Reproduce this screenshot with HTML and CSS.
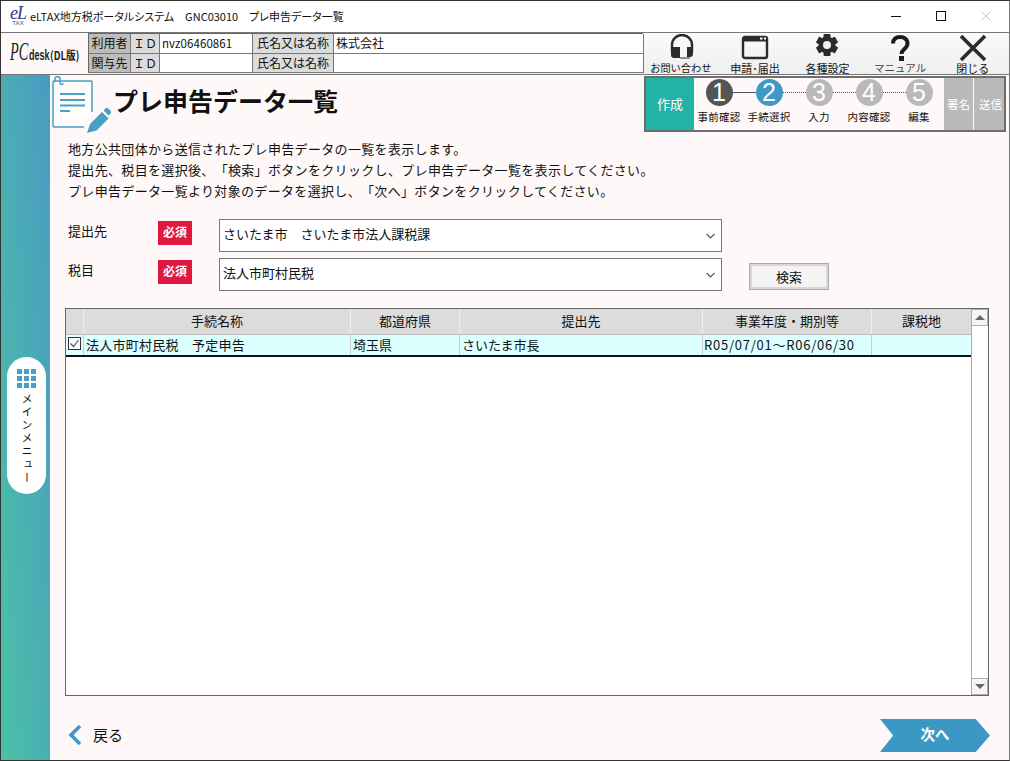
FILE: index.html
```html
<!DOCTYPE html>
<html lang="ja">
<head>
    <meta charset="UTF-8">
    <title>プレ申告データ一覧</title>
    <link rel="stylesheet" href="styles.css">
</head>
<body>
<div class="window">

    <!-- title bar -->
    <div class="titlebar">
        <div class="app-logo"><span class="app-logo-el">eL</span><span class="app-logo-tax">TAX</span></div>
        <div class="titlebar-text">eLTAX地方税ポータルシステム　GNC03010　プレ申告データ一覧</div>
        <div class="win-buttons">
            <svg width="12" height="12" viewBox="0 0 12 12"><path d="M1 6.500h10" stroke="#111" fill="none"/></svg>
            <svg width="12" height="12" viewBox="0 0 12 12"><rect x="1.500" y="1.500" width="9" height="9" stroke="#111" fill="none"/></svg>
            <svg width="12" height="12" viewBox="0 0 12 12"><path d="M1 1l10 10M11 1L1 11" stroke="#ccc" fill="none"/></svg>
        </div>
    </div>

    <!-- user info + tool buttons -->
    <div class="toolbar">
        <div class="pcdesk"><span class="pc">PC</span><span class="desk">desk</span><span class="dl">(DL版)</span></div>
        <div class="userinfo">
            <div class="ui-head ui-w1">利用者</div>
            <div class="ui-label ui-w2">ＩＤ</div>
            <div class="ui-value ui-w3 ui-id">nvz06460861</div>
            <div class="ui-label ui-w4">氏名又は名称</div>
            <div class="ui-value ui-w5">株式会社</div>
            <div class="ui-head">関与先</div>
            <div class="ui-label">ＩＤ</div>
            <div class="ui-value"></div>
            <div class="ui-label">氏名又は名称</div>
            <div class="ui-value"></div>
        </div>
        <div class="tools">
            <div class="tool">
                <svg width="32" height="28" viewBox="0 0 32 28"><path d="M6 18V11a10 10 0 0 1 20 0v7" fill="none" stroke="#2b2b2b" stroke-width="2.400"/><path d="M5 13h9v11H8a3 3 0 0 1-3-3zM27 13h-6v10h3a3 3 0 0 0 3-3z" fill="#2b2b2b"/><path d="M14 24h10" stroke="#2b2b2b" stroke-width="1"/></svg>
                <span class="tool-label tool-label-small">お問い合わせ</span>
            </div>
            <div class="tool">
                <svg width="32" height="28" viewBox="0 0 32 28"><rect x="4" y="3" width="24" height="21" rx="2" fill="none" stroke="#2b2b2b" stroke-width="2.400"/><path d="M4 3h24v4.500H4z" fill="#2b2b2b"/><path d="M21 4.500h2.500M25 4.500h2" stroke="#fff" stroke-width="2"/></svg>
                <span class="tool-label">申請･届出</span>
            </div>
            <div class="tool">
                <svg width="32" height="28" viewBox="0 0 32 28">
                    <g fill="#2b2b2b">
                        <rect x="12.500" y="0" width="7" height="22" rx="1"/>
                        <rect x="12.500" y="0" width="7" height="22" rx="1" transform="rotate(60 16 11)"/>
                        <rect x="12.500" y="0" width="7" height="22" rx="1" transform="rotate(120 16 11)"/>
                        <circle cx="16" cy="11" r="8.500"/>
                    </g>
                    <circle cx="16" cy="11" r="4" fill="#f3f3f3"/>
                </svg>
                <span class="tool-label">各種設定</span>
            </div>
            <div class="tool">
                <svg width="32" height="28" viewBox="0 0 32 28"><path d="M9 9.500C9 5 12 3 16 3s7.500 2 7.500 6.500c0 5.500-6 5.500-6 10.500" fill="none" stroke="#1c1c1c" stroke-width="4"/><rect x="15" y="22" width="5" height="5" fill="#1c1c1c"/></svg>
                <span class="tool-label tool-label-thin">マニュアル</span>
            </div>
            <div class="tool">
                <svg width="32" height="28" viewBox="0 0 32 28"><path d="M4 2l24 24M28 2L4 26" fill="none" stroke="#2b2b2b" stroke-width="3.600"/></svg>
                <span class="tool-label">閉じる</span>
            </div>
        </div>
    </div>

    <div class="main">
        <!-- left side menu -->
        <div class="sidebar">
            <div class="menu-pill">
                <div class="menu-grid"><i></i><i></i><i></i><i></i><i></i><i></i><i></i><i></i><i></i></div>
                <div class="menu-text">メインメニュー</div>
            </div>
        </div>

        <div class="content">
            <div class="page-head">
                <svg class="page-icon" width="60" height="60" viewBox="0 0 60 60">
                    <path d="M40 36V6a1 1 0 0 0-1-1H2a1 1 0 0 0-1 1v44a1 1 0 0 0 1 1h30" fill="#fffdfc" stroke="#4a9fc4" stroke-width="1.500"/>
                    <path d="M3 6V3a2.500 2.500 0 0 1 5 0v4a1.500 1.500 0 0 0 3 0" fill="none" stroke="#4a9fc4" stroke-width="1.500"/>
                    <path d="M8 18h25M8 24h25M8 29.500h25M8 35h10" stroke="#4a9fc4" stroke-width="1.800"/>
                    <path d="M35 57l3-9 12-12 6.500 6.500-12 12zM51.500 34.500l2-2a2 2 0 0 1 2.800 0l2.200 2.200a2 2 0 0 1 0 2.800l-2 2z" fill="#4a9fc4"/>
                </svg>
                <h1>プレ申告データ一覧</h1>
                <div class="steps">
                    <div class="step-now">作成</div>
                    <div class="step-list">
                        <div class="step step-done"><b>1</b><span>事前確認</span></div>
                        <div class="step-link step-link-solid"></div>
                        <div class="step step-current"><b>2</b><span>手続選択</span></div>
                        <div class="step-link"></div>
                        <div class="step"><b>3</b><span>入力</span></div>
                        <div class="step-link"></div>
                        <div class="step"><b>4</b><span>内容確認</span></div>
                        <div class="step-link"></div>
                        <div class="step"><b>5</b><span>編集</span></div>
                    </div>
                    <div class="step-end step-end-first">署名</div>
                    <div class="step-end step-end-last">送信</div>
                </div>
            </div>

            <div class="desc">
                <p>地方公共団体から送信されたプレ申告データの一覧を表示します。</p>
                <p>提出先、税目を選択後、「検索」ボタンをクリックし、プレ申告データ一覧を表示してください。</p>
                <p>プレ申告データ一覧より対象のデータを選択し、「次へ」ボタンをクリックしてください。</p>
            </div>

            <div class="form-row">
                <div class="form-label">提出先</div>
                <div class="required">必須</div>
                <div class="select">さいたま市　さいたま市法人課税課<svg width="9" height="6" viewBox="0 0 9 6"><path d="M.5 1l4 4 4-4" fill="none" stroke="#555" stroke-width="1.100"/></svg></div>
            </div>
            <div class="form-row form-row-2">
                <div class="form-label">税目</div>
                <div class="required">必須</div>
                <div class="select select-low">法人市町村民税<svg width="9" height="6" viewBox="0 0 9 6"><path d="M.5 1l4 4 4-4" fill="none" stroke="#555" stroke-width="1.100"/></svg></div>
                <div class="search-btn">検索</div>
            </div>

            <div class="grid-box">
                <div class="grid">
                    <div class="grid-row grid-head">
                        <div class="c-check"></div>
                        <div class="c-name">手続名称</div>
                        <div class="c-pref">都道府県</div>
                        <div class="c-dest">提出先</div>
                        <div class="c-year">事業年度・期別等</div>
                        <div class="c-place">課税地</div>
                    </div>
                    <div class="grid-row grid-data">
                        <div class="c-check"><span class="checkbox"><svg width="11" height="11" viewBox="0 0 11 11"><path d="M1.500 5.500l3 3 5-6.500" fill="none" stroke="#555" stroke-width="1.200"/></svg></span></div>
                        <div class="c-name">法人市町村民税　予定申告</div>
                        <div class="c-pref">埼玉県</div>
                        <div class="c-dest">さいたま市長</div>
                        <div class="c-year">R05/07/01～R06/06/30</div>
                        <div class="c-place"></div>
                    </div>
                </div>
                <div class="scrollbar">
                    <div class="scroll-btn"><i class="arrow-up"></i></div>
                    <div class="scroll-track"></div>
                    <div class="scroll-btn"><i class="arrow-down"></i></div>
                </div>
            </div>

            <div class="footer">
                <div class="back">
                    <svg width="16" height="22" viewBox="0 0 16 22"><path d="M13 2L4 11l9 9" fill="none" stroke="#3f9ac4" stroke-width="3.600"/></svg>
                    <span>戻る</span>
                </div>
                <div class="next">次へ</div>
            </div>
        </div>
    </div>
</div>
</body>
</html>
```

FILE: styles.css
```css
* { box-sizing: border-box; }
html, body {
    margin: 0;
    padding: 0;
}
body {
    font-family: "Noto Sans CJK JP", "Noto Sans", sans-serif;
    font-size: 13px;
    color: #111;
    background: #fff;
    text-spacing-trim: space-all;
}
.window {
    width: 1010px;
    height: 761px;
    border: 1px solid #333;
    border-right-color: #777;
    display: flex;
    flex-direction: column;
    overflow: hidden;
}

/* title bar */
.titlebar {
    height: 31px;
    flex: none;
    display: flex;
    align-items: center;
    background: #fff;
    padding: 0 0 2px 8px;
}
.app-logo {
    width: 18px;
    height: 18px;
    display: flex;
    flex-direction: column;
    align-items: center;
    line-height: 1;
}
.app-logo-el {
    font-family: "Liberation Serif", serif;
    font-style: italic;
    font-size: 18px;
    letter-spacing: -1px;
    color: #2a3a8c;
    height: 13px;
    line-height: 13px;
}
.app-logo-tax {
    font-family: "Liberation Sans", sans-serif;
    font-size: 6px;
    font-weight: bold;
    color: #888;
}
.titlebar-text {
    margin-left: 3px;
    font-size: 11px;
    white-space: nowrap;
    font-feature-settings: "palt";
}
.win-buttons {
    margin-left: auto;
    display: flex;
    gap: 33px;
    padding-right: 17px;
}

/* toolbar */
.toolbar {
    height: 43px;
    flex: none;
    display: flex;
    border-top: 1px solid #777;
    border-bottom: 1px solid #777;
    background: linear-gradient(#fafafa, #efefef);
}
.pcdesk {
    width: 87px;
    padding: 0 0 9px 9px;
    white-space: nowrap;
    background: #fdf8f7;
    color: #222;
    display: flex;
    align-items: flex-end;
}
.pc, .desk, .dl {
    display: inline-block;
    transform-origin: left bottom;
}
.pc {
    width: 19px;
    font-family: "Liberation Serif", serif;
    font-style: italic;
    font-size: 26px;
    line-height: 26px;
    transform: scaleX(.55);
}
.desk {
    width: 21px;
    font-family: "Liberation Sans", sans-serif;
    font-weight: bold;
    font-size: 15px;
    line-height: 20px;
    transform: scaleX(.6);
}
.dl {
    font-weight: bold;
    font-size: 12px;
    line-height: 20px;
    transform: scaleX(.8);
}
.userinfo {
    width: 555px;
    height: 40px;
    display: grid;
    grid-template-columns: 42px 29px 93px 81px 310px;
    grid-template-rows: 20px 19px;
    border: 1px solid #666;
    font-size: 12px;
    background: #fff;
}
.userinfo > div {
    border-right: 1px solid #777;
    border-bottom: 1px solid #777;
    line-height: 18px;
    white-space: nowrap;
    overflow: hidden;
}
.ui-head {
    background: #bdbdbd;
    text-align: center;
}
.ui-label {
    background: #dcdcdc;
    text-align: center;
}
.ui-value {
    background: #fff;
    padding-left: 2px;
}
.ui-id {
    font-size: 11.500px;
    letter-spacing: .1px;
}
.tools {
    flex: 1;
    display: flex;
    padding-left: 3px;
}
.tool {
    flex: 1;
    display: flex;
    flex-direction: column;
    align-items: center;
    padding-top: 1px;
}
.tool-label {
    font-size: 11px;
    line-height: 12px;
    white-space: nowrap;
}
.tool-label-small {
    font-size: 10.200px;
    margin-left: -3px;
}
.tool-label-thin { color: #444; font-size: 10.500px; }

/* body area */
.main {
    flex: 1;
    display: flex;
    min-height: 0;
}
.sidebar {
    width: 49px;
    flex: none;
    background: linear-gradient(to top right, #4ac2a6, #4a9ac2);
    padding: 282px 0 0 6px;
}
.menu-pill {
    width: 39px;
    height: 137px;
    background: #fff;
    border-radius: 20px;
    display: flex;
    flex-direction: column;
    align-items: center;
    padding-top: 12px;
}
.menu-grid {
    display: grid;
    grid-template-columns: repeat(3, 5px);
    grid-auto-rows: 5px;
    gap: 2px;
}
.menu-grid i { background: #4a9fc4; }
.menu-text {
    writing-mode: vertical-rl;
    font-size: 11px;
    letter-spacing: 2.200px;
    margin-top: 5px;
    line-height: 1;
}
.content {
    flex: 1;
    background: #fef9f8;
    display: flex;
    flex-direction: column;
    min-width: 0;
}
.page-head {
    height: 60px;
    flex: none;
    display: flex;
    align-items: flex-start;
}
.page-icon {
    margin: 1px 0 0 2px;
    flex: none;
}
h1 {
    margin: 7px 0 0 1px;
    font-size: 25px;
    line-height: 36px;
    font-weight: bold;
    color: #111;
}
.steps {
    margin-left: auto;
    margin-top: 1px;
    margin-right: 3px;
    width: 362px;
    height: 56px;
    display: flex;
    border: 2px solid #6e6e6e;
    background: #fef9f8;
}
.step-now {
    width: 48px;
    flex: none;
    background: #21b3a6;
    color: #fff;
    font-size: 13px;
    line-height: 52px;
    text-align: center;
}
.step-list {
    width: 250px;
    flex: none;
    display: flex;
    align-items: flex-start;
    padding: 1px 0 0 11.500px;
}
.step {
    width: 27px;
    flex: none;
    display: flex;
    flex-direction: column;
    align-items: center;
}
.step b {
    width: 27px;
    height: 27px;
    flex: none;
    border-radius: 50%;
    background: #b9b9b9;
    color: #fff;
    font-family: "Liberation Sans", sans-serif;
    font-weight: normal;
    font-size: 25px;
    line-height: 27px;
    text-align: center;
}
.step span {
    font-size: 10.500px;
    line-height: 12px;
    margin-top: 5px;
    white-space: nowrap;
    letter-spacing: .2px;
}
.step-done b { background: #555; }
.step-current b { background: #4098c5; }
.step-link {
    width: 23px;
    flex: none;
    height: 0;
    margin-top: 13px;
    padding: 0;
    border-top: 1px dotted #555;
}
.step-link-solid { border-top-style: solid; }
.step-end {
    width: 30px;
    flex: none;
    background: #b9b9b9;
    color: #fff;
    font-size: 11.500px;
    line-height: 52px;
    text-align: center;
    white-space: nowrap;
    overflow: hidden;
}
.step-end-first {
    border-right: 1px solid #fff;
}
.step-end-last {
    padding-left: 3px;
}

.desc {
    padding: 3px 0 0 18px;
    font-size: 13px;
    letter-spacing: .33px;
    line-height: 21px;
    height: 84px;
    flex: none;
}
.desc p { margin: 0; }

.form-row {
    display: flex;
    align-items: flex-start;
    padding-left: 18px;
    height: 39px;
    flex: none;
}
.form-label {
    width: 90px;
    flex: none;
    font-size: 13px;
    line-height: 22px;
    padding-top: 1px;
}
.required {
    width: 34px;
    height: 24px;
    margin-top: 2px;
    flex: none;
    background: #e0173f;
    color: #fff;
    font-weight: bold;
    font-size: 12px;
    line-height: 21px;
    text-align: center;
}
.select {
    width: 503px;
    height: 33px;
    margin-left: 27px;
    flex: none;
    border: 1px solid #777;
    background: #fff;
    font-size: 13px;
    padding: 0 3px 5px 3px;
    display: flex;
    align-items: center;
    justify-content: space-between;
}
.select svg { margin: 5px 3px 0 0; }
.select-low {
    padding-bottom: 4px;
}
.select-low svg { margin-top: 4px; }
.search-btn {
    width: 80px;
    height: 27px;
    margin: 5px 0 0 27px;
    border: 1px solid #aaa;
    box-shadow: inset 0 0 0 2px #d8d8d8;
    background: #f4f4f4;
    font-size: 13px;
    line-height: 25px;
    text-align: center;
}
.form-row-2 { height: 50px; }

/* list */
.grid-box {
    width: 924px;
    height: 388px;
    flex: none;
    margin-left: 15px;
    border: 1px solid #666;
    background: #fff;
    display: flex;
}
.grid {
    flex: 1;
    min-width: 0;
}
.grid-row {
    display: grid;
    grid-template-columns: 18px 267px 109px 243px 169px 100px;
}
.grid-row > div {
    border-right: 1px solid #ccc;
    white-space: nowrap;
    overflow: hidden;
}
.grid-head {
    height: 26px;
    background: #dcdcdc;
    text-align: center;
    font-size: 13px;
    line-height: 24px;
    border-bottom: 1px solid #bbb;
}
.grid-head > div { border-right-color: #eee; }
.grid-data {
    height: 20px;
    background: #dcffff;
    font-size: 13px;
    line-height: 20px;
    border-bottom: 2px solid #111;
    box-sizing: content-box;
}
.grid-data > div { padding-left: 2px; }
.grid-data .c-check {
    padding: 2px 0 0 2px;
}
.grid-data .c-name { letter-spacing: .25px; }
.grid-data .c-year {
    padding-left: 1px;
    letter-spacing: .75px;
}
.checkbox {
    display: block;
    width: 13px;
    height: 13px;
    border: 1px solid #333;
    background: #fff;
}
.checkbox svg { display: block; }
.scrollbar {
    width: 17px;
    flex: none;
    display: flex;
    flex-direction: column;
    border-left: 1px solid #aaa;
    background: #fff;
}
.scroll-track { flex: 1; }
.scroll-btn {
    height: 17px;
    border: 1px solid #b0b0b0;
    border-left: none;
    background: #f5f5f5;
    display: flex;
    align-items: center;
    justify-content: center;
}
.arrow-up, .arrow-down {
    width: 0;
    height: 0;
    border-left: 5px solid transparent;
    border-right: 5px solid transparent;
}
.arrow-up { border-bottom: 5px solid #666; }
.arrow-down { border-top: 5px solid #666; }

.footer {
    flex: 1;
    display: flex;
    justify-content: space-between;
    align-items: flex-start;
    padding: 23px 19px 0 17px;
}
.back {
    display: flex;
    align-items: center;
    gap: 10px;
    margin-top: 5px;
    font-size: 15px;
    line-height: 22px;
}
.next {
    width: 110px;
    height: 33px;
    background: #3b98c4;
    color: #fff;
    font-weight: bold;
    font-size: 14.500px;
    line-height: 29px;
    text-align: center;
    clip-path: polygon(0 0, 87% 0, 100% 50%, 87% 100%, 0 100%, 12% 50%);
}
```
